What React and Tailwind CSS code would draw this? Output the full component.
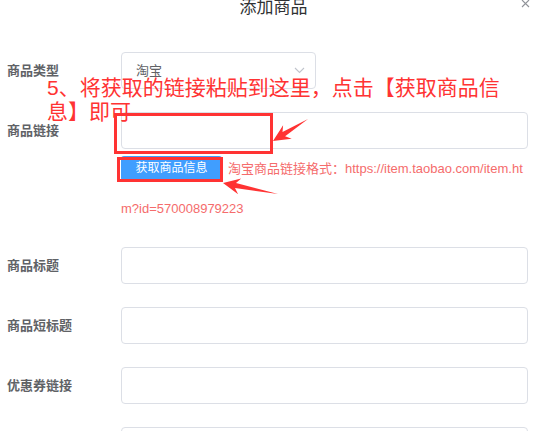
import React from 'react';

const font = { fontFamily: '"Liberation Sans", "Noto Sans CJK SC", sans-serif' };

function arrowPoints(tip, tail, len, half, neck) {
  const dx = tail[0] - tip[0];
  const dy = tail[1] - tip[1];
  const d = Math.hypot(dx, dy);
  const ux = dx / d;
  const uy = dy / d;
  const nx = -uy;
  const ny = ux;
  const p = (a, b) => `${(tip[0] + ux * a + nx * b).toFixed(1)},${(tip[1] + uy * a + ny * b).toFixed(1)}`;
  return [
    `${tip[0]},${tip[1]}`,
    p(len, half),
    p(len * 0.75, neck),
    `${tail[0]},${tail[1]}`,
    p(len * 0.75, -neck),
    p(len, -half),
  ].join(' ');
}

function Field({ label, children, className = '' }) {
  return (
    <div className={`flex items-start ${className}`}>
      <label className="w-[121px] shrink-0 pl-[7px] h-[37px] flex items-center text-[13px] font-bold text-[#606266]">
        {label}
      </label>
      <div className="flex-1 pr-[19px]">{children}</div>
    </div>
  );
}

function TextInput() {
  return <div className="h-[37px] rounded-[4px] border border-[#dcdfe6] bg-white" />;
}

export default function App() {
  return (
    <div className="relative w-[547px] h-[431px] overflow-hidden bg-white" style={font}>
      <div className="relative h-[52px] flex flex-col">
        <div className="text-center text-[17px] leading-[18px] -mt-[1px] text-[#303133]">添加商品</div>
        <svg className="absolute left-[521px] top-[-1px]" width="9" height="9" viewBox="0 0 9 9">
          <path d="M1 1 L8 8 M8 1 L1 8" stroke="#909399" strokeWidth="1.1" />
        </svg>
      </div>

      <Field label="商品类型">
        <div className="w-[195px] h-[37px] rounded-[4px] border border-[#dcdfe6] flex items-center justify-between pl-[14px] pr-[10px]">
          <span className="text-[13px] text-[#606266]">淘宝</span>
          <svg width="11" height="7" viewBox="0 0 11 7">
            <path d="M1 1 L5.5 5.5 L10 1" fill="none" stroke="#c0c4cc" strokeWidth="1.1" />
          </svg>
        </div>
      </Field>

      <Field label="商品链接" className="mt-[23px]">
        <TextInput />
        <div className="leading-[40px] text-[13px] break-all text-[#f56c6c]">
          <button className="inline-block align-middle h-[25px] w-[101px] -mt-[3px] rounded-[3px] bg-[#409eff] text-white text-[12px] leading-[25px]">
            获取商品信息
          </button>
          <span className="ml-[6px]">淘宝商品链接格式：https://item.taobao.com/item.htm?id=570008979223</span>
        </div>
      </Field>

      <Field label="商品标题" className="mt-[18px]">
        <TextInput />
      </Field>
      <Field label="商品短标题" className="mt-[23px]">
        <TextInput />
      </Field>
      <Field label="优惠券链接" className="mt-[23px]">
        <TextInput />
      </Field>
      <Field label="" className="mt-[23px]">
        <TextInput />
      </Field>

      {/* annotation overlay */}
      <div className="absolute left-[47px] top-[76px] w-[470px] text-[21px] leading-[24px] text-[#ff3333]">
        5、将获取的链接粘贴到这里，点击【获取商品信息】即可
      </div>
      <div className="absolute left-[114px] top-[113px] w-[159px] h-[41px] border-[3px] border-[#ff3333]" />
      <div className="absolute left-[117px] top-[157px] w-[106px] h-[25px] border-[3px] border-[#ff3333]" />
      <svg className="absolute left-0 top-0 pointer-events-none" width="547" height="431">
        <polygon points={arrowPoints([273, 141], [308, 119], 17, 8, 2.5)} fill="#ff3333" />
        <polygon points={arrowPoints([223, 183], [278, 194], 17, 8, 2.5)} fill="#ff3333" />
      </svg>
    </div>
  );
}
